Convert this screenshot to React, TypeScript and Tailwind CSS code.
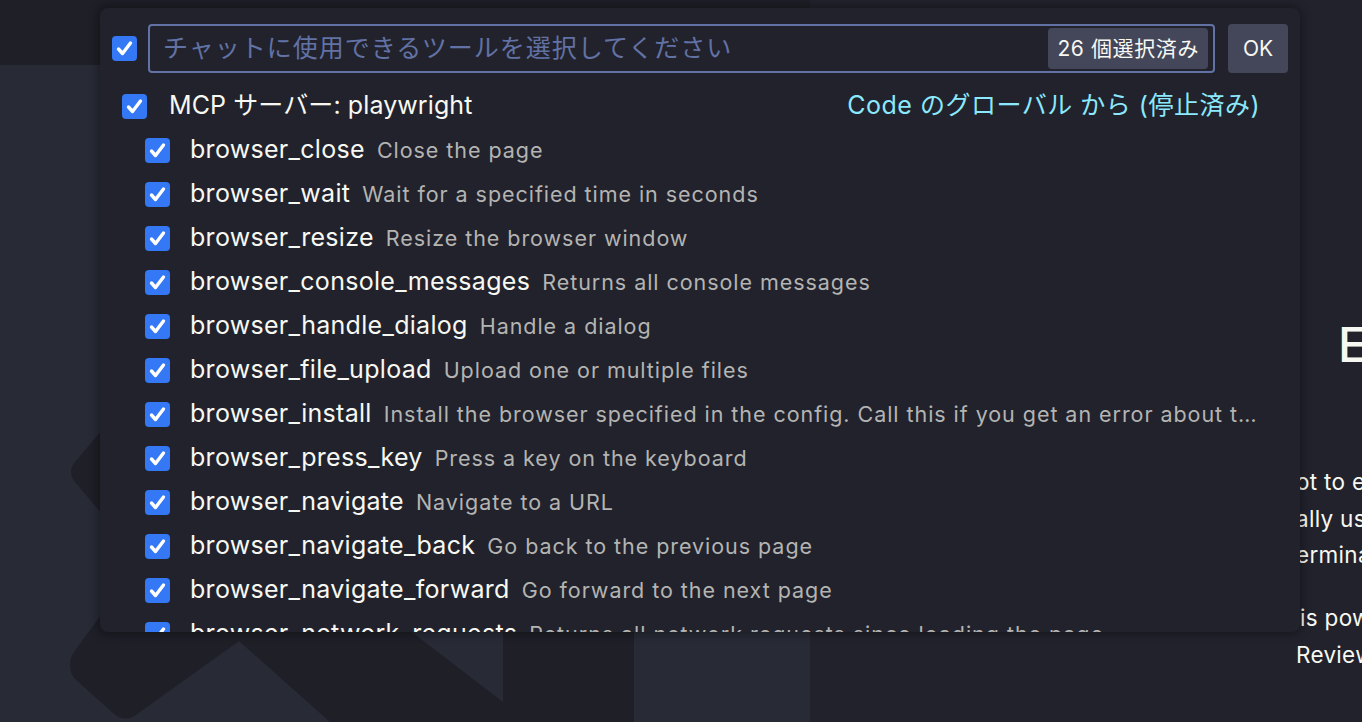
import React from 'react';

const tools: [string, string][] = [
  ['browser_close', 'Close the page'],
  ['browser_wait', 'Wait for a specified time in seconds'],
  ['browser_resize', 'Resize the browser window'],
  ['browser_console_messages', 'Returns all console messages'],
  ['browser_handle_dialog', 'Handle a dialog'],
  ['browser_file_upload', 'Upload one or multiple files'],
  ['browser_install', 'Install the browser specified in the config. Call this if you get an error about the browser not being installed.'],
  ['browser_press_key', 'Press a key on the keyboard'],
  ['browser_navigate', 'Navigate to a URL'],
  ['browser_navigate_back', 'Go back to the previous page'],
  ['browser_navigate_forward', 'Go forward to the next page'],
  ['browser_network_requests', 'Returns all network requests since loading the page'],
];

function Check() {
  return (
    <div className="w-[25px] h-[25px] shrink-0 rounded-[4px] bg-[#3478f6] flex items-center justify-center">
      <svg width="25" height="25" viewBox="0 0 25 25">
        <polyline points="6.5,13 10.5,17.5 18.5,7" fill="none" stroke="#fff" strokeWidth="3.4" strokeLinecap="round" strokeLinejoin="round" />
      </svg>
    </div>
  );
}

export default function App() {
  return (
    <div
      className="relative w-[1362px] h-[722px] overflow-hidden flex bg-[#21222c]"
      style={{ fontFamily: 'Inter, "Noto Sans CJK JP", sans-serif' }}
    >
      {/* left editor group with watermark */}
      <div className="w-[810px] shrink-0 flex flex-col">
        <div className="h-[65px] bg-[#1e1f27]" />
        <div className="relative flex-1 bg-[#282a36]">
          <svg className="absolute left-0 top-0" width="810" height="657" viewBox="0 65 810 657">
            <path d="M 112 418 L 75 462 Q 67 472 75 482 L 112 526 Z" fill="#1e1f27" />
            <path
              d="M 112 600 L 74 652 Q 66 665 74 678 L 114 714 Q 126 724 140 712 L 239 641 L 330 722 L 634 722 L 634 600 Z"
              fill="#1e1f27"
            />
            <path d="M 370 600 L 503 600 L 503 702 Z" fill="#282a36" />
          </svg>
        </div>
      </div>

      {/* right pane (webview content) */}
      <div className="flex-1 flex flex-col text-[#f8f8f2] whitespace-nowrap">
        <div className="pt-[317px] pl-[528px] text-[48px] leading-[56px] font-medium">Extension</div>
        <div className="mt-[91px] pl-[486px] text-[22.5px] tracking-[0.3px] leading-[36.5px]">
          <div>ot to explore the page</div>
          <div>ally use the browser</div>
          <div>erminal commands</div>
        </div>
        <div className="mt-[25px] pl-[486px] text-[22.5px] tracking-[0.3px] leading-[37px]">
          <div className="pl-[4px]">is powerful</div>
          <div>Review</div>
        </div>
      </div>

      {/* quick pick */}
      <div className="absolute left-[100px] top-[8px] w-[1200px] h-[624px] rounded-[8px] overflow-hidden bg-[#21222c] shadow-[0_0_10px_2px_rgba(0,0,0,0.35)] flex flex-col">
        <div className="flex items-center pt-[16px] pl-[12px] pr-[12px]">
          <Check />
          <div className="ml-[11px] flex-1 h-[49px] rounded-[4px] border-2 border-[#6272a4] flex items-center pl-[13px] pr-[5px]">
            <div className="flex-1 text-[25px] tracking-[1px] text-[#6272a4] whitespace-nowrap">
              チャットに使用できるツールを選択してください
            </div>
            <div className="h-[41px] px-[9px] rounded-[4px] bg-[#44475a] flex items-center text-[21px] tracking-[0.6px] text-[#f8f8f2] whitespace-nowrap">
              26 個選択済み
            </div>
          </div>
          <div className="ml-[13px] w-[60px] h-[49px] rounded-[4px] bg-[#44475a] flex items-center justify-center text-[21px] text-[#f8f8f2]">
            OK
          </div>
        </div>

        <div className="mt-[11px] flex flex-col">
          <div className="h-[44px] flex items-center pl-[22px] pr-[40px]">
            <Check />
            <div className="ml-[22px] text-[25px] tracking-[0.1px] text-[#f8f8f2] whitespace-nowrap">MCP サーバー: playwright</div>
            <div className="ml-auto text-[25px] tracking-[0.5px] text-[#8be9fd] whitespace-nowrap">Code のグローバル から (停止済み)</div>
          </div>
          {tools.map(([name, desc]) => (
            <div key={name} className="h-[44px] shrink-0 flex items-center pl-[45px] pr-[40px] min-w-0">
              <Check />
              <div className="ml-[20px] text-[25px] tracking-[0.3px] text-[#f8f8f2] whitespace-nowrap shrink-0">{name}</div>
              <div className="ml-[12px] text-[21.5px] tracking-[0.95px] text-[#b4b4b2] whitespace-nowrap overflow-hidden text-ellipsis min-w-0">
                {desc}
              </div>
            </div>
          ))}
        </div>
      </div>
    </div>
  );
}
